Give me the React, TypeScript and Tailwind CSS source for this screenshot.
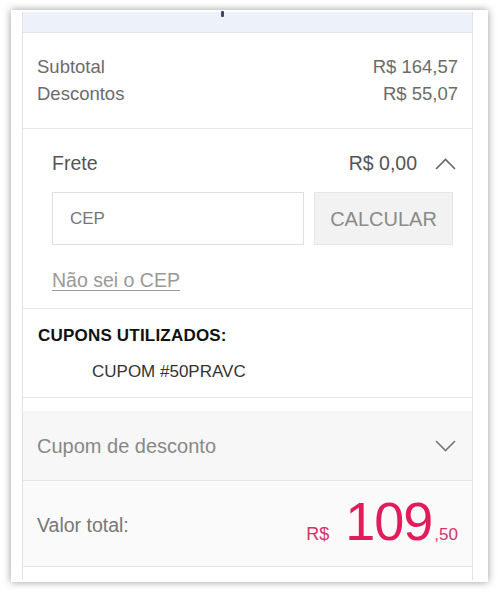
const ChevronUp = () => (
  <svg width="21" height="12" viewBox="0 0 21 12" fill="none" className="ml-[18px]">
    <polyline points="1,11 10.5,1.5 20,11" stroke="#666" strokeWidth="1.6" />
  </svg>
);

const ChevronDown = () => (
  <svg width="21" height="12" viewBox="0 0 21 12" fill="none">
    <polyline points="1,1 10.5,10.5 20,1" stroke="#777" strokeWidth="1.6" />
  </svg>
);

const App = () => {
  return (
    <div
      className="bg-white w-[500px] h-[594px] pt-[10px] pl-[11px] pr-[12px]"
      style={{ fontFamily: '"Liberation Sans", Arial, sans-serif' }}
    >
      <div className="bg-white h-[572px] pl-[11px] pr-[15px] pt-[2px] shadow-[0_0_8px_rgba(0,0,0,0.4)]">
        <div className="h-[568px] border-x border-[#e3e3e3] flex flex-col">
          {/* top strip */}
          <div className="h-[21px] bg-[#edf1f9] border-b border-[#dfe3ea] pl-[198px]">
            <div className="w-[3px] h-[6px] bg-[#3d4a66] rounded-[1px] -mt-[1px]" />
          </div>

          {/* summary */}
          <div className="pl-[14px] pr-[14px] pt-[20px] pb-[21px] text-[18.5px] leading-[27px] text-[#6b6b6b]">
            <div className="flex justify-between">
              <span>Subtotal</span>
              <span>R$ 164,57</span>
            </div>
            <div className="flex justify-between">
              <span>Descontos</span>
              <span>R$ 55,07</span>
            </div>
          </div>

          {/* frete */}
          <div className="border-t border-[#e6e6e6] pl-[29px] pr-[19px] pt-[20px] pb-[16px]">
            <div className="flex items-center justify-between h-[30px] text-[19.5px] text-[#555] -mr-[3px]">
              <span>Frete</span>
              <div className="flex items-center">
                <span>R$ 0,00</span>
                <ChevronUp />
              </div>
            </div>
            <div className="flex gap-[10px] mt-[13px]">
              <div className="w-[252px] h-[53px] border border-[#e0e0e0] flex items-center pl-[17px] text-[17px] text-[#777]">
                CEP
              </div>
              <div className="flex-1 h-[53px] bg-[#f2f2f2] border border-[#e6e6e6] flex items-center justify-center text-[20px] text-[#8a8a8a]">
                CALCULAR
              </div>
            </div>
            <div className="mt-[23px] h-[24px] leading-[24px] text-[19.5px] text-[#999] underline underline-offset-[3px]">
              Não sei o CEP
            </div>
          </div>

          {/* cupons */}
          <div className="border-t border-[#e6e6e6] pl-[15px] pt-[16px] h-[89px]">
            <div className="text-[17px] font-bold text-[#111] leading-[22px] tracking-[0.2px]">CUPONS UTILIZADOS:</div>
            <div className="pl-[54px] mt-[14px] text-[17px] text-[#333] leading-[22px]">CUPOM #50PRAVC</div>
          </div>

          {/* cupom de desconto */}
          <div className="border-t border-[#e6e6e6] pt-[13px]">
            <div className="h-[69px] bg-[#f7f7f7] flex items-center justify-between pl-[14px] pr-[16px] text-[20px] text-[#888]">
              <span>Cupom de desconto</span>
              <ChevronDown />
            </div>
          </div>

          {/* total */}
          <div className="border-t border-[#e6e6e6] h-[86px] bg-[#fafafa] flex items-center justify-between pl-[14px] pr-[14px]">
            <span className="text-[19.5px] text-[#777] pt-[4px]">Valor total:</span>
            <div className="flex items-baseline text-[#e21b5a] pb-[6px]">
              <span className="text-[18px] text-[#d6336c]">R$</span>
              <span className="text-[54px] leading-none ml-[16px] tracking-[-1px]">109</span>
              <span className="text-[17px] ml-[2px] text-[#d6336c]">,50</span>
            </div>
          </div>

          <div className="border-t border-[#e6e6e6] flex-1" />
        </div>
      </div>
    </div>
  );
};

export default App;
